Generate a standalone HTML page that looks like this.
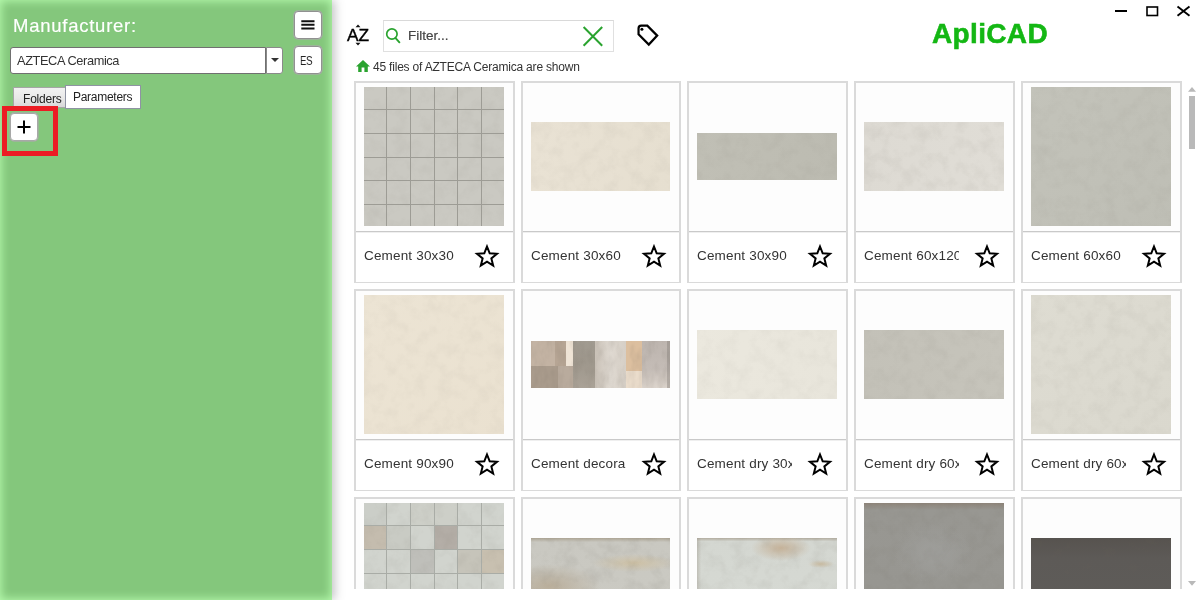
<!DOCTYPE html>
<html lang="en">
<head>
<meta charset="utf-8">
<title>ApliCAD</title>
<style>
*{box-sizing:border-box;margin:0;padding:0}
html,body{width:1200px;height:600px;overflow:hidden;background:#fff;font-family:"Liberation Sans",sans-serif;color:#333}
.abs{position:absolute}
#mfr,#combo span,.tab span,.lbl,#count,#logo,#az,#filter span,.es span{will-change:transform}
#left{position:absolute;left:0;top:0;width:332px;height:600px;background:#84c77c;box-shadow:inset 0 0 10px 1px #b6fbad, 3px 0 9px rgba(85,85,92,.34)}
#mfr{position:absolute;left:13px;top:14px;font-size:18.5px;line-height:24px;letter-spacing:.75px;color:#fff;white-space:nowrap;-webkit-text-stroke:.15px #fff}
.btn{position:absolute;background:#fff;border:1px solid #919191;border-radius:4px;box-shadow:0 0 0 .7px #a4aea2}
#combo{position:absolute;left:10px;top:47px;width:256px;height:27px;background:#fff;border:1px solid #707070;border-radius:3px 0 0 3px;font-size:12.8px;letter-spacing:-.4px;line-height:25px;padding-left:6px;color:#333;white-space:nowrap}
#drop{position:absolute;left:266px;top:47px;width:17px;height:27px;background:#fff;border:1px solid #8a8a8a;border-left:1px solid #8a8a8a;border-radius:0 3px 3px 0}
#drop:after{content:"";position:absolute;left:4px;top:10px;border:4px solid transparent;border-top:4.5px solid #333;border-bottom:0}
.tab{position:absolute;font-size:12px;white-space:nowrap;color:#222;text-align:center}
#tab1{letter-spacing:-.2px;left:13px;top:87px;width:53px;height:21px;background:linear-gradient(#f2f2f2,#e9e9e9 50%,#d8d8d8);border:1px solid #a6a6a6;line-height:23px;padding-left:5px}
#tab2{letter-spacing:-.28px;left:65px;top:85px;width:76px;height:24px;background:#fff;border:1px solid #8f93a3;line-height:22px}
#red{position:absolute;left:2px;top:106px;width:56px;height:50px;border:5px solid #ec1c24}
#main{position:absolute;left:332px;top:0;width:868px;height:600px}
#filter{position:absolute;left:383px;top:20px;width:231px;height:32px;border:1px solid #e0e0e0;border-top-color:#d9d9d9;background:#fff}
#filter span{position:absolute;left:23.5px;top:0;line-height:29px;-webkit-text-stroke:.2px #444;font-size:13.5px;color:#444}
#count{position:absolute;left:373px;top:60px;font-size:12px;line-height:14px;letter-spacing:-.2px;color:#333;white-space:nowrap}
#logo{position:absolute;left:931.5px;top:16.6px;font-size:28px;line-height:34px;letter-spacing:.35px;font-weight:bold;color:#14b714;white-space:nowrap;-webkit-text-stroke:.55px #14b714}
#az{position:absolute;left:347px;top:25px;font-size:17.3px;line-height:20px;color:#000;white-space:nowrap;letter-spacing:0;-webkit-text-stroke:.4px #000}
#grid{position:absolute;left:0;top:0;width:1200px;height:589px;overflow:hidden}
.card{position:absolute;width:161px;height:202px;border:2px solid #dadada;background:#fdfdfd}
.card .sep{position:absolute;left:0;right:0;top:148px;height:51px;background:#fff;border-top:1px solid #c9c9c9;box-shadow:inset 0 1px 0 #efefef}
.card .lbl{position:absolute;left:8px;top:157px;width:95px;height:30px;overflow:hidden;white-space:nowrap;font-size:13.5px;line-height:32px;letter-spacing:.17px;color:#333}
.card svg.star{position:absolute;left:118.1px;top:161px}
.img{position:absolute;left:8px;width:140px;overflow:hidden}
</style>
</head>
<body>
<div id="left">
  <div id="mfr">Manufacturer:</div>
  <div class="btn" style="left:294px;top:11px;width:28px;height:28px">
    <svg class="abs" style="left:6px;top:8px" width="14" height="11" viewBox="0 0 14 11"><path d="M0.3 1.3h13.2M0.3 4.85h13.2M0.3 8.55h13.2" stroke="#111" stroke-width="2" fill="none"/></svg>
  </div>
  <div id="combo"><span style="display:inline-block">AZTECA Ceramica</span></div>
  <div id="drop"></div>
  <div class="btn es" style="left:294px;top:46px;width:28px;height:28px;font-size:12px;line-height:26px;color:#222"><span style="position:absolute;left:5px;top:.5px;letter-spacing:-.3px;transform:scaleX(.8);transform-origin:0 0">ES</span></div>
  <div class="tab" id="tab1"><span style="display:inline-block">Folders</span></div>
  <div class="tab" id="tab2"><span style="display:inline-block">Parameters</span></div>
  <div class="btn" style="left:10px;top:113px;width:28px;height:28px;border-color:#a8a8a8">
    <svg class="abs" style="left:6px;top:6px" width="14" height="14" viewBox="0 0 14 14"><path d="M7 0.5v13M0.5 7h13" stroke="#000" stroke-width="2" fill="none"/></svg>
  </div>
  <div id="red"></div>
</div>

<svg width="0" height="0" style="position:absolute"><defs>
<filter id="n1" x="0" y="0" width="100%" height="100%" color-interpolation-filters="sRGB"><feTurbulence type="fractalNoise" baseFrequency="0.075" numOctaves="4" seed="7"/><feColorMatrix type="matrix" values="0 0 0 0 0.42  0 0 0 0 0.40  0 0 0 0 0.36  1.1 0 0 0 -0.46"/></filter>
<filter id="n2" x="0" y="0" width="100%" height="100%" color-interpolation-filters="sRGB"><feTurbulence type="fractalNoise" baseFrequency="0.12 0.05" numOctaves="3" seed="11"/><feColorMatrix type="matrix" values="0 0 0 0 0.40  0 0 0 0 0.37  0 0 0 0 0.33  1.3 0 0 0 -0.52"/></filter>
</defs></svg>
<div id="grid">
<div class="card" style="left:354px;top:81px;width:161px"><div class="img" style="top:4px;height:139px;background:#cac9c2"><svg class="abs" style="left:-37px;top:-53px" width="300" height="300"><rect width="300" height="300" filter="url(#n1)" opacity="0.13"/></svg><div class="abs" style="left:22px;top:0;width:1.4px;height:140px;background:#9d9c95"></div><div class="abs" style="left:0;top:22px;height:1.4px;width:140px;background:#9d9c95"></div><div class="abs" style="left:45.7px;top:0;width:1.4px;height:140px;background:#9d9c95"></div><div class="abs" style="left:0;top:45.7px;height:1.4px;width:140px;background:#9d9c95"></div><div class="abs" style="left:69.5px;top:0;width:1.4px;height:140px;background:#9d9c95"></div><div class="abs" style="left:0;top:69.5px;height:1.4px;width:140px;background:#9d9c95"></div><div class="abs" style="left:92.8px;top:0;width:1.4px;height:140px;background:#9d9c95"></div><div class="abs" style="left:0;top:92.8px;height:1.4px;width:140px;background:#9d9c95"></div><div class="abs" style="left:116.5px;top:0;width:1.4px;height:140px;background:#9d9c95"></div><div class="abs" style="left:0;top:116.5px;height:1.4px;width:140px;background:#9d9c95"></div></div><div class="sep"></div><div class="lbl">Cement 30x30</div><svg class="star" width="26" height="26" viewBox="0 0 26 26"><path d="M13.00 2.50L15.70 9.28L22.99 9.76L17.37 14.42L19.17 21.49L13.00 17.60L6.83 21.49L8.63 14.42L3.01 9.76L10.30 9.28z" fill="none" stroke="#000" stroke-width="2" stroke-miterlimit="6"/></svg></div>
<div class="card" style="left:521px;top:81px;width:160px"><div class="img" style="top:39px;height:69px;width:139px;background:linear-gradient(90deg,#e9e2d4,#e6dfd0)"><svg class="abs" style="left:-74px;top:-106px" width="300" height="300"><rect width="300" height="300" filter="url(#n1)" opacity="0.12"/></svg></div><div class="sep"></div><div class="lbl">Cement 30x60</div><svg class="star" width="26" height="26" viewBox="0 0 26 26"><path d="M13.00 2.50L15.70 9.28L22.99 9.76L17.37 14.42L19.17 21.49L13.00 17.60L6.83 21.49L8.63 14.42L3.01 9.76L10.30 9.28z" fill="none" stroke="#000" stroke-width="2" stroke-miterlimit="6"/></svg></div>
<div class="card" style="left:687px;top:81px;width:161px"><div class="img" style="top:50px;height:47px;background:linear-gradient(90deg,#c0bfb5,#bcbbb1)"><svg class="abs" style="left:-111px;top:-9px" width="300" height="300"><rect width="300" height="300" filter="url(#n1)" opacity="0.12"/></svg></div><div class="sep"></div><div class="lbl">Cement 30x90</div><svg class="star" width="26" height="26" viewBox="0 0 26 26"><path d="M13.00 2.50L15.70 9.28L22.99 9.76L17.37 14.42L19.17 21.49L13.00 17.60L6.83 21.49L8.63 14.42L3.01 9.76L10.30 9.28z" fill="none" stroke="#000" stroke-width="2" stroke-miterlimit="6"/></svg></div>
<div class="card" style="left:854px;top:81px;width:161px"><div class="img" style="top:39px;height:69px;background:linear-gradient(90deg,#dddad3,#e0ddd6)"><svg class="abs" style="left:-148px;top:-62px" width="300" height="300"><rect width="300" height="300" filter="url(#n1)" opacity="0.16"/></svg></div><div class="sep"></div><div class="lbl">Cement 60x120</div><svg class="star" width="26" height="26" viewBox="0 0 26 26"><path d="M13.00 2.50L15.70 9.28L22.99 9.76L17.37 14.42L19.17 21.49L13.00 17.60L6.83 21.49L8.63 14.42L3.01 9.76L10.30 9.28z" fill="none" stroke="#000" stroke-width="2" stroke-miterlimit="6"/></svg></div>
<div class="card" style="left:1021px;top:81px;width:161px"><div class="img" style="top:4px;height:139px;background:linear-gradient(135deg,#c3c3ba,#bebeb5)"><svg class="abs" style="left:-35px;top:-115px" width="300" height="300"><rect width="300" height="300" filter="url(#n1)" opacity="0.13"/></svg></div><div class="sep"></div><div class="lbl">Cement 60x60</div><svg class="star" width="26" height="26" viewBox="0 0 26 26"><path d="M13.00 2.50L15.70 9.28L22.99 9.76L17.37 14.42L19.17 21.49L13.00 17.60L6.83 21.49L8.63 14.42L3.01 9.76L10.30 9.28z" fill="none" stroke="#000" stroke-width="2" stroke-miterlimit="6"/></svg></div>
<div class="card" style="left:354px;top:289px;width:161px"><div class="img" style="top:4px;height:139px;background:linear-gradient(135deg,#ece4d4,#eae1d0)"><svg class="abs" style="left:-72px;top:-18px" width="300" height="300"><rect width="300" height="300" filter="url(#n1)" opacity="0.10"/></svg></div><div class="sep"></div><div class="lbl">Cement 90x90</div><svg class="star" width="26" height="26" viewBox="0 0 26 26"><path d="M13.00 2.50L15.70 9.28L22.99 9.76L17.37 14.42L19.17 21.49L13.00 17.60L6.83 21.49L8.63 14.42L3.01 9.76L10.30 9.28z" fill="none" stroke="#000" stroke-width="2" stroke-miterlimit="6"/></svg></div>
<div class="card" style="left:521px;top:289px;width:160px"><div class="img" style="top:50px;height:47px;width:139px;background:#cfc5bc"><div class="abs" style="left:0px;top:0px;width:23.5px;height:25px;background:#c3b3a3"></div><div class="abs" style="left:23.5px;top:0px;width:11px;height:25px;background:#b6a594"></div><div class="abs" style="left:34.5px;top:0px;width:7px;height:25px;background:#efe4d6"></div><div class="abs" style="left:0px;top:25px;width:27px;height:22px;background:#a99b8c"></div><div class="abs" style="left:27px;top:25px;width:14.5px;height:22px;background:#b9ab9d"></div><div class="abs" style="left:41.5px;top:0px;width:22.5px;height:47px;background:linear-gradient(180deg,#a19b91,#9e978c 45%,#aaa297)"></div><div class="abs" style="left:64px;top:0px;width:31px;height:47px;background:linear-gradient(90deg,#c9c1b7,#dfd9d1 50%,#d6cfc6)"></div><div class="abs" style="left:95px;top:0px;width:16px;height:30px;background:#dcbf9f"></div><div class="abs" style="left:95px;top:30px;width:16px;height:17px;background:#eadccb"></div><div class="abs" style="left:111px;top:0px;width:28px;height:47px;background:linear-gradient(180deg,#bdb5af,#c4bcb6 60%,#ddd5cd)"></div><div class="abs" style="left:136px;top:0px;width:3px;height:47px;background:rgba(120,115,110,.35)"></div><svg class="abs" style="left:-109px;top:-71px" width="300" height="300"><rect width="300" height="300" filter="url(#n2)" opacity="0.21"/></svg></div><div class="sep"></div><div class="lbl">Cement decora</div><svg class="star" width="26" height="26" viewBox="0 0 26 26"><path d="M13.00 2.50L15.70 9.28L22.99 9.76L17.37 14.42L19.17 21.49L13.00 17.60L6.83 21.49L8.63 14.42L3.01 9.76L10.30 9.28z" fill="none" stroke="#000" stroke-width="2" stroke-miterlimit="6"/></svg></div>
<div class="card" style="left:687px;top:289px;width:161px"><div class="img" style="top:39px;height:69px;background:linear-gradient(90deg,#ebe8de,#e8e5db)"><svg class="abs" style="left:-146px;top:-124px" width="300" height="300"><rect width="300" height="300" filter="url(#n1)" opacity="0.10"/></svg></div><div class="sep"></div><div class="lbl">Cement dry 30x60</div><svg class="star" width="26" height="26" viewBox="0 0 26 26"><path d="M13.00 2.50L15.70 9.28L22.99 9.76L17.37 14.42L19.17 21.49L13.00 17.60L6.83 21.49L8.63 14.42L3.01 9.76L10.30 9.28z" fill="none" stroke="#000" stroke-width="2" stroke-miterlimit="6"/></svg></div>
<div class="card" style="left:854px;top:289px;width:161px"><div class="img" style="top:39px;height:69px;background:linear-gradient(90deg,#c3c1b8,#c6c4bb)"><svg class="abs" style="left:-33px;top:-27px" width="300" height="300"><rect width="300" height="300" filter="url(#n1)" opacity="0.13"/></svg></div><div class="sep"></div><div class="lbl">Cement dry 60x120</div><svg class="star" width="26" height="26" viewBox="0 0 26 26"><path d="M13.00 2.50L15.70 9.28L22.99 9.76L17.37 14.42L19.17 21.49L13.00 17.60L6.83 21.49L8.63 14.42L3.01 9.76L10.30 9.28z" fill="none" stroke="#000" stroke-width="2" stroke-miterlimit="6"/></svg></div>
<div class="card" style="left:1021px;top:289px;width:161px"><div class="img" style="top:4px;height:139px;background:linear-gradient(135deg,#dedcd2,#dad8ce)"><svg class="abs" style="left:-70px;top:-80px" width="300" height="300"><rect width="300" height="300" filter="url(#n1)" opacity="0.13"/></svg></div><div class="sep"></div><div class="lbl">Cement dry 60x60</div><svg class="star" width="26" height="26" viewBox="0 0 26 26"><path d="M13.00 2.50L15.70 9.28L22.99 9.76L17.37 14.42L19.17 21.49L13.00 17.60L6.83 21.49L8.63 14.42L3.01 9.76L10.30 9.28z" fill="none" stroke="#000" stroke-width="2" stroke-miterlimit="6"/></svg></div>
<div class="card" style="left:354px;top:497px;width:161px"><div class="img" style="top:4px;height:140px;background:#d1d4ce"><div class="abs" style="left:0px;top:22px;width:22.7px;height:24px;background:#c4bcae"></div><div class="abs" style="left:22.7px;top:22px;width:23.7px;height:24px;background:#c9cbc4"></div><div class="abs" style="left:70px;top:22px;width:24px;height:24px;background:#b4aea7"></div><div class="abs" style="left:46.4px;top:46px;width:23.7px;height:24px;background:#bfbfba"></div><div class="abs" style="left:93.9px;top:46px;width:23px;height:24px;background:#c6c4ba"></div><div class="abs" style="left:116.8px;top:46px;width:23.2px;height:24px;background:#c8c0b0"></div><div class="abs" style="left:0px;top:0px;width:22.7px;height:22px;background:#cbcec8"></div><div class="abs" style="left:46.4px;top:0px;width:47px;height:22px;background:#cdcfc8"></div><svg class="abs" style="left:-107px;top:-133px" width="300" height="300"><rect width="300" height="300" filter="url(#n1)" opacity="0.16"/></svg><div class="abs" style="left:22px;top:0;width:1.4px;height:140px;background:#a9aca6"></div><div class="abs" style="left:0;top:22px;height:1.4px;width:140px;background:#a9aca6"></div><div class="abs" style="left:45.7px;top:0;width:1.4px;height:140px;background:#a9aca6"></div><div class="abs" style="left:0;top:45.7px;height:1.4px;width:140px;background:#a9aca6"></div><div class="abs" style="left:69.5px;top:0;width:1.4px;height:140px;background:#a9aca6"></div><div class="abs" style="left:0;top:69.5px;height:1.4px;width:140px;background:#a9aca6"></div><div class="abs" style="left:92.8px;top:0;width:1.4px;height:140px;background:#a9aca6"></div><div class="abs" style="left:0;top:92.8px;height:1.4px;width:140px;background:#a9aca6"></div><div class="abs" style="left:116.5px;top:0;width:1.4px;height:140px;background:#a9aca6"></div><div class="abs" style="left:0;top:116.5px;height:1.4px;width:140px;background:#a9aca6"></div></div><div class="sep"></div><div class="lbl">Cement mosaic</div><svg class="star" width="26" height="26" viewBox="0 0 26 26"><path d="M13.00 2.50L15.70 9.28L22.99 9.76L17.37 14.42L19.17 21.49L13.00 17.60L6.83 21.49L8.63 14.42L3.01 9.76L10.30 9.28z" fill="none" stroke="#000" stroke-width="2" stroke-miterlimit="6"/></svg></div>
<div class="card" style="left:521px;top:497px;width:160px"><div class="img" style="top:39px;height:69px;width:139px;background:radial-gradient(ellipse 42px 9px at 103px 25px,rgba(206,192,162,.9),rgba(206,192,162,0) 100%),radial-gradient(ellipse 52px 22px at 18px 48px,rgba(184,172,152,.95),rgba(184,172,152,0) 100%),linear-gradient(180deg,#ada595 0,#c9c8c1 6%,#cbcac3 100%)"><svg class="abs" style="left:-144px;top:-36px" width="300" height="300"><rect width="300" height="300" filter="url(#n1)" opacity="0.23"/></svg></div><div class="sep"></div><div class="lbl">Cement rust 30x60</div><svg class="star" width="26" height="26" viewBox="0 0 26 26"><path d="M13.00 2.50L15.70 9.28L22.99 9.76L17.37 14.42L19.17 21.49L13.00 17.60L6.83 21.49L8.63 14.42L3.01 9.76L10.30 9.28z" fill="none" stroke="#000" stroke-width="2" stroke-miterlimit="6"/></svg></div>
<div class="card" style="left:687px;top:497px;width:161px"><div class="img" style="top:39px;height:69px;background:radial-gradient(ellipse 30px 13px at 84px 10px,rgba(196,176,150,.95),rgba(196,176,150,0) 100%),radial-gradient(ellipse 13px 4px at 124px 26px,rgba(205,188,158,.85),rgba(205,188,158,0) 100%),linear-gradient(90deg,rgba(170,165,155,.5),rgba(170,165,155,0) 3%),linear-gradient(180deg,#b3ada0 0,#d4d7d1 5%,#d6d9d3 100%)"><svg class="abs" style="left:-31px;top:-89px" width="300" height="300"><rect width="300" height="300" filter="url(#n1)" opacity="0.18"/></svg></div><div class="sep"></div><div class="lbl">Cement rust 30x90</div><svg class="star" width="26" height="26" viewBox="0 0 26 26"><path d="M13.00 2.50L15.70 9.28L22.99 9.76L17.37 14.42L19.17 21.49L13.00 17.60L6.83 21.49L8.63 14.42L3.01 9.76L10.30 9.28z" fill="none" stroke="#000" stroke-width="2" stroke-miterlimit="6"/></svg></div>
<div class="card" style="left:854px;top:497px;width:161px"><div class="img" style="top:4px;height:140px;background:radial-gradient(ellipse 40px 30px at 70px 50px,rgba(160,160,157,.9),rgba(160,160,157,0) 100%),linear-gradient(180deg,#8d8479 0,#989792 5%,#979691 60%,#93928c)"><svg class="abs" style="left:-68px;top:-142px" width="300" height="300"><rect width="300" height="300" filter="url(#n1)" opacity="0.21"/></svg></div><div class="sep"></div><div class="lbl">Cement rust 60x120</div><svg class="star" width="26" height="26" viewBox="0 0 26 26"><path d="M13.00 2.50L15.70 9.28L22.99 9.76L17.37 14.42L19.17 21.49L13.00 17.60L6.83 21.49L8.63 14.42L3.01 9.76L10.30 9.28z" fill="none" stroke="#000" stroke-width="2" stroke-miterlimit="6"/></svg></div>
<div class="card" style="left:1021px;top:497px;width:161px"><div class="img" style="top:39px;height:69px;background:linear-gradient(180deg,#57534f 0,#5d5a57 30%,#5e5c59)"><svg class="abs" style="left:-105px;top:-45px" width="300" height="300"><rect width="300" height="300" filter="url(#n1)" opacity="0.18"/></svg></div><div class="sep"></div><div class="lbl">Cement rust 60x60</div><svg class="star" width="26" height="26" viewBox="0 0 26 26"><path d="M13.00 2.50L15.70 9.28L22.99 9.76L17.37 14.42L19.17 21.49L13.00 17.60L6.83 21.49L8.63 14.42L3.01 9.76L10.30 9.28z" fill="none" stroke="#000" stroke-width="2" stroke-miterlimit="6"/></svg></div>
</div>

<!-- toolbar -->
<div id="az">AZ</div>
<svg class="abs" style="left:353px;top:23px" width="10" height="24" viewBox="0 0 10 24"><path d="M2.5 4.2L5 1.6L7.5 4.2zM2.5 19.8L5 22.4L7.5 19.8z" fill="#111"/></svg>
<div id="filter">
  <svg class="abs" style="left:0px;top:5px" width="20" height="20" viewBox="0 0 20 20"><circle cx="7.9" cy="8" r="5.2" fill="none" stroke="#2aa32f" stroke-width="1.7"/><path d="M11.6 12.1L15.4 16.3" stroke="#2aa32f" stroke-width="1.9" stroke-linecap="round"/></svg>
  <span>Filter...</span>
  <svg class="abs" style="left:198px;top:4px" width="22" height="22" viewBox="0 0 22 22"><path d="M1.6 2L20.2 20.8M20.2 2L1.6 20.8" stroke="#2aa32f" stroke-width="2" fill="none"/></svg>
</div>
<svg class="abs" style="left:636px;top:23px" width="24" height="24" viewBox="0 0 24 24"><path d="M2.55 5.4Q2.55 2.7 5.2 2.6L11.3 2.7L21.2 12.6L12.8 21.6L2.55 11.3z" fill="none" stroke="#000" stroke-width="2.2" stroke-linejoin="miter"/><circle cx="5.9" cy="6.2" r="1.5" fill="#000"/></svg>
<svg class="abs" style="left:356px;top:60px" width="14" height="12" viewBox="0 0 14 12"><path d="M7 0L14 6.4H11.8V12H8.4V7.6H5.6V12H2.2V6.4H0z" fill="#2aa32f"/></svg>
<div id="count">45 files of AZTECA Ceramica are shown</div>
<div id="logo">ApliCAD</div>

<!-- window controls -->
<svg class="abs" style="left:1110px;top:0" width="90" height="24" viewBox="0 0 90 24"><path d="M5 11h12" stroke="#000" stroke-width="2" fill="none"/><rect x="37" y="7" width="10.5" height="8.5" fill="none" stroke="#000" stroke-width="1.6"/><path d="M67.5 6.5L79.5 15.8M79.5 6.5L67.5 15.8" stroke="#000" stroke-width="1.9" fill="none"/></svg>

<!-- scrollbar -->
<svg class="abs" style="left:1186px;top:84px" width="12" height="506" viewBox="0 0 12 506"><path d="M2 7.8L6 3L10 7.8z" fill="#b9b9b9"/><rect x="3" y="12" width="6" height="53" fill="#b9b9b9"/><path d="M2 497L6 501.8L10 497z" fill="#b9b9b9"/></svg>
</body>
</html>
